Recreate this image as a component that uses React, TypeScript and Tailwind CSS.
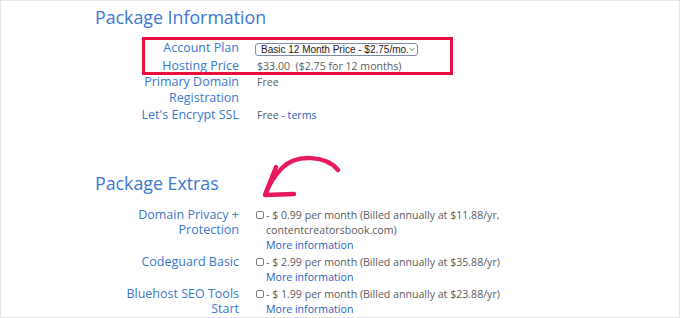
import React from "react";

const label = "w-[238px] shrink-0 text-right text-[12.5px] text-[#3b78cc]";
const val = "ml-[18px] text-[10.6px] text-[#5b5b5b]";

function Check() {
  return <span className="mt-[3px] mr-[2px] inline-block h-[8px] w-[8px] shrink-0 rounded-[2px] border border-[#7d7d7d] bg-white" />;
}

export default function App() {
  return (
    <div
      className="relative h-[318px] w-[680px] overflow-hidden border border-[#e6e6e6] bg-white pt-[4px]"
      style={{ fontFamily: '"Open Sans", "Noto Sans", sans-serif' }}
    >
      <div className="pl-[94px] text-[17.8px] leading-[24px] text-[#3a78d2]">Package Information</div>

      <div className="mt-[11px] leading-[16px]">
        <div className="flex h-[18px]">
          <div className={label}>Account Plan</div>
          <div className="ml-[16px] pt-[3px]">
            <div
              className="flex h-[13px] w-[163px] items-center justify-between overflow-hidden whitespace-nowrap rounded-[3px] border border-[#7f8ea6] pl-[5px] pr-[2px] text-[10px] leading-[11px] text-[#1a1a1a]"
              style={{ fontFamily: '"Liberation Sans", Arial, sans-serif' }}
            >
              <span>Basic 12 Month Price - $2.75/mo.</span>
              <svg className="shrink-0" width="6" height="5" viewBox="0 0 6 5" fill="none" stroke="#666" strokeWidth="1">
                <path d="M0.8 1.2l2.2 2.2L5.2 1.2" />
              </svg>
            </div>
          </div>
        </div>
        <div className="flex items-baseline">
          <div className={label}>Hosting Price</div>
          <div className={val}>$33.00&nbsp; ($2.75 for 12 months)</div>
        </div>
        <div className="flex items-baseline">
          <div className={label}>
            Primary Domain
            <br />
            Registration
          </div>
          <div className={val}>Free</div>
        </div>
        <div className="mt-[1px] flex items-baseline">
          <div className={label}>Let's Encrypt SSL</div>
          <div className={val}>
            Free - <span className="text-[#1f60c4]">terms</span>
          </div>
        </div>
      </div>

      <div className="mt-[48px] pl-[94px] text-[17.8px] leading-[24px] text-[#3a78d2]">Package Extras</div>

      <div className="mt-[12px] flex flex-col gap-[1px] leading-[15px]">
        <div className="flex items-baseline">
          <div className={label}>
            Domain Privacy +
            <br />
            Protection
          </div>
          <div className="ml-[17px] flex items-baseline text-[10.6px] text-[#5b5b5b]">
            <Check />
            <div>
              - $ 0.99 per month (Billed annually at $11.88/yr,
              <br />
              contentcreatorsbook.com)
              <br />
              <span className="text-[#1f60c4]">More information</span>
            </div>
          </div>
        </div>
        <div className="flex items-baseline">
          <div className={label}>Codeguard Basic</div>
          <div className="ml-[17px] flex items-baseline text-[10.6px] text-[#5b5b5b]">
            <Check />
            <div>
              - $ 2.99 per month (Billed annually at $35.88/yr)
              <br />
              <span className="text-[#1f60c4]">More information</span>
            </div>
          </div>
        </div>
        <div className="flex items-baseline">
          <div className={label}>
            Bluehost SEO Tools
            <br />
            Start
          </div>
          <div className="ml-[17px] flex items-baseline text-[10.6px] text-[#5b5b5b]">
            <Check />
            <div>
              - $ 1.99 per month (Billed annually at $23.88/yr)
              <br />
              <span className="text-[#1f60c4]">More information</span>
            </div>
          </div>
        </div>
      </div>

      {/* red highlight box */}
      <div className="pointer-events-none absolute left-[141px] top-[36px] h-[38px] w-[311px] border-[3px] border-[#e9103e]" />

      {/* hand-drawn arrow */}
      <svg className="pointer-events-none absolute left-0 top-0" width="680" height="318" viewBox="0 0 680 318" fill="none">
        <path
          d="M337 169 C 326 155, 296 152, 281 167 C 273 175, 268 184, 265 192"
          stroke="#e8195e"
          strokeWidth="4.5"
          strokeLinecap="round"
        />
        <path d="M275 166 L 264 194 L 293 193" stroke="#e8195e" strokeWidth="4.5" strokeLinecap="round" strokeLinejoin="round" />
      </svg>
    </div>
  );
}
